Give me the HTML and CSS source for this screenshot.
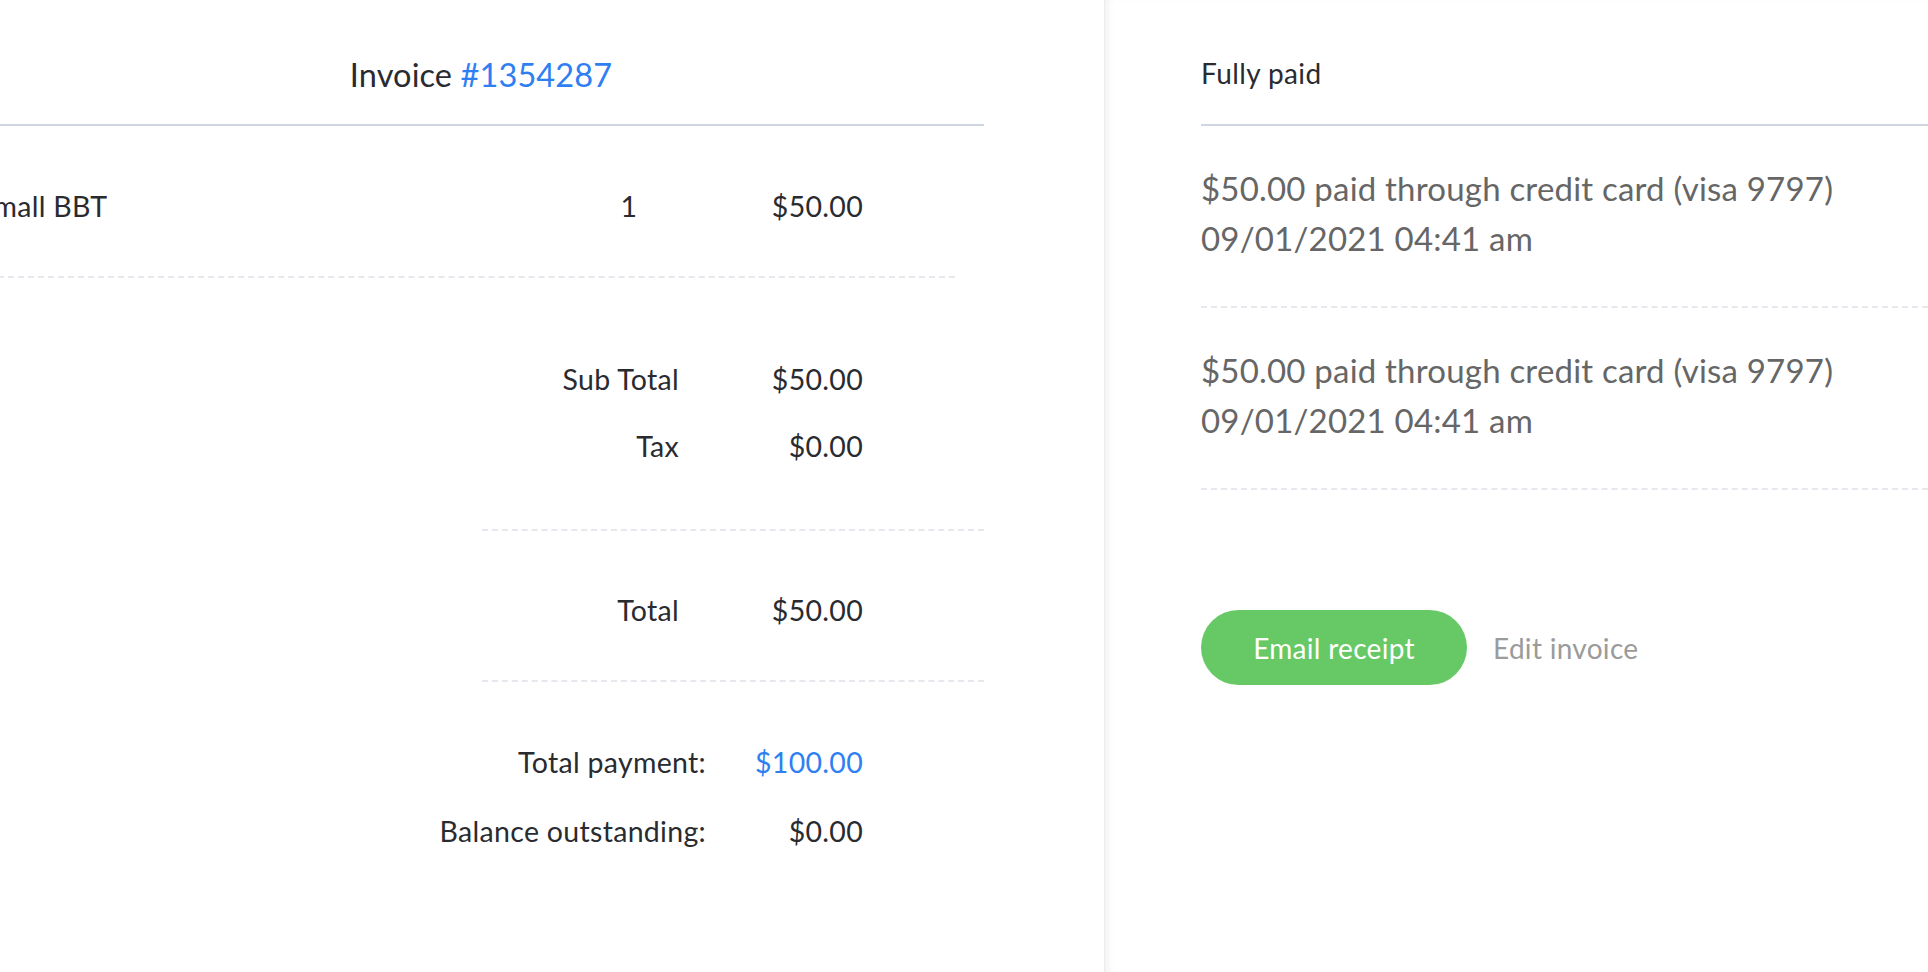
FILE: index.html
```html
<!DOCTYPE html>
<html lang="en">
<head>
<meta charset="utf-8">
<title>Invoice #1354287</title>
<link rel="stylesheet" href="styles.css">
</head>
<body>
<div class="page">
  <section class="invoice-panel">
    <div class="invoice">
      <header class="invoice-head">
        <h1 class="invoice-title">Invoice <span class="link">#1354287</span></h1>
      </header>
      <div class="items">
        <div class="item-row">
          <span class="item-name">Small BBT</span>
          <span class="item-qty">1</span>
          <span class="item-amount">$50.00</span>
        </div>
      </div>
      <div class="totals">
        <div class="subtotals">
          <div class="sum-row"><span class="sum-label">Sub Total</span><span class="sum-value">$50.00</span></div>
          <div class="sum-row"><span class="sum-label">Tax</span><span class="sum-value">$0.00</span></div>
        </div>
        <div class="grand">
          <div class="sum-row"><span class="sum-label">Total</span><span class="sum-value">$50.00</span></div>
        </div>
      </div>
      <div class="balance">
        <div class="bal-row"><span class="sum-label">Total payment:</span><span class="sum-value link">$100.00</span></div>
        <div class="bal-row"><span class="sum-label">Balance outstanding:</span><span class="sum-value">$0.00</span></div>
      </div>
    </div>
  </section>
  <aside class="payments-panel">
    <div class="status">Fully paid</div>
    <ul class="payments">
      <li class="payment">
        <div>$50.00 paid through credit card (visa 9797)</div>
        <div>09/01/2021 04:41 am</div>
      </li>
      <li class="payment">
        <div>$50.00 paid through credit card (visa 9797)</div>
        <div>09/01/2021 04:41 am</div>
      </li>
    </ul>
    <div class="actions">
      <button class="btn-email" type="button">Email receipt</button>
      <a class="edit-link" href="#">Edit invoice</a>
    </div>
  </aside>
</div>
</body>
</html>
```

FILE: styles.css
```css
* { box-sizing: border-box; }
html, body {
  margin: 0;
  padding: 0;
  background: #ffffff;
}
body {
  font-family: "Lato", "Open Sans", sans-serif;
  color: #292b30;
  overflow: hidden;
}
.page {
  display: flex;
  width: 1928px;
  height: 972px;
}
.invoice-panel {
  width: 1104px;
  flex: none;
  overflow: hidden;
  background: #ffffff;
}
.invoice {
  width: 1006px;
  margin-left: -22px;
}
.invoice-head {
  padding-top: 55px;
  height: 126px;
  border-bottom: 2px solid #cfd6df;
  text-align: center;
}
.invoice-title {
  margin: 0;
  font-size: 32.5px;
  font-weight: 400;
  line-height: 40px;
  letter-spacing: 0.1px;
}
.link { color: #2f7ff2; text-decoration: none; }

.items {
  margin-right: 29px;
}
.item-row {
  display: grid;
  grid-template-columns: 1fr 100px 184px;
  padding: 62px 92px 52px 0;
  border-bottom: 2px dashed #e7e8ed;
  font-size: 28.5px;
  letter-spacing: 0.3px;
  line-height: 36px;
}
.item-qty { text-align: center; }
.item-amount { text-align: right; }

.totals {
  margin-left: 504px;
}
.subtotals {
  padding: 67px 0 50px;
  border-bottom: 2px dashed #e7e8ed;
}
.subtotals .sum-row { height: 67px; }
.grand {
  padding: 61px 0 52px;
  border-bottom: 2px dashed #e7e8ed;
}
.sum-row {
  display: grid;
  grid-template-columns: 1fr 184px;
  align-items: center;
  padding-right: 121px;
  font-size: 28.5px;
  letter-spacing: 0.3px;
  line-height: 36px;
}
.sum-label { text-align: right; }
.sum-value { text-align: right; }

.balance {
  padding-top: 62px;
  display: flex;
  flex-direction: column;
  gap: 33px;
}
.bal-row {
  display: grid;
  grid-template-columns: auto 157px;
  justify-content: end;
  padding-right: 121px;
  font-size: 28.5px;
  letter-spacing: 0.3px;
  line-height: 36px;
}

.payments-panel {
  flex: 1;
  min-width: 0;
  overflow: hidden;
  padding-left: 96px;
  border-left: 1px solid #ececec;
  box-shadow: inset 7px 0 8px -5px rgba(0, 0, 0, 0.07);
}
.status {
  padding-top: 55px;
  height: 126px;
  border-bottom: 2px solid #cfd6df;
  font-size: 28px;
  letter-spacing: 0.4px;
  line-height: 36px;
}
.payments {
  list-style: none;
  margin: 0;
  padding: 0;
}
.payment {
  padding: 37px 0 43px;
  border-bottom: 2px dashed #e7e8ed;
  color: #666666;
  font-size: 33px;
  letter-spacing: 0.2px;
  line-height: 50px;
}
.actions {
  display: flex;
  align-items: center;
  gap: 26px;
  padding-top: 120px;
}
.btn-email {
  width: 266px;
  height: 75px;
  border: none;
  border-radius: 38px;
  background: #66c966;
  color: #ffffff;
  font-family: inherit;
  font-size: 28px;
  letter-spacing: 0.3px;
  padding: 0;
}
.edit-link {
  color: #9b9b9b;
  font-size: 28px;
  letter-spacing: 0.3px;
  text-decoration: none;
}
```
